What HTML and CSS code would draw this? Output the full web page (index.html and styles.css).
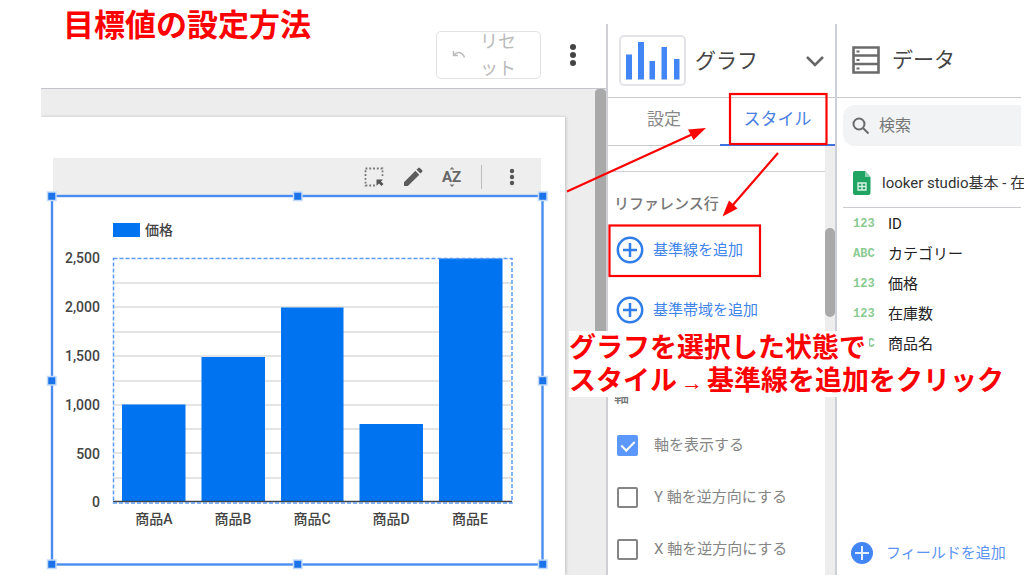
FILE: index.html
```html
<!DOCTYPE html>
<html lang="ja">
<head>
<meta charset="utf-8">
<meta name="viewport" content="width=device-width, initial-scale=1">
<title>目標値の設定方法</title>
<link rel="stylesheet" href="styles.css">
</head>
<body>
<h1 class="title">目標値の設定方法</h1>
<main class="app">
  <section class="editor">
    <header class="topbar">
      <button class="reset" type="button">
        <svg width="14" height="10" viewBox="0 0 14 10" fill="none" stroke="#bbb" stroke-width="1.5"><path d="M1.500 1v4.500h4.500M2 5C5 1.500 10.500 1.500 12.500 7.500"/></svg>
        <span class="reset-label">リセット</span>
      </button>
      <button class="icon-btn more" type="button" aria-label="その他">
        <svg width="8" height="24" viewBox="0 0 8 24" fill="#444"><circle cx="4" cy="4" r="3"/><circle cx="4" cy="12" r="3"/><circle cx="4" cy="20" r="3"/></svg>
      </button>
    </header>
    <div class="canvas">
      <div class="sheet">
        <div class="tools">
          <button class="icon-btn tool" type="button" aria-label="選択">
            <svg width="20" height="20" viewBox="0 0 20 20"><rect x="1.500" y="1.500" width="17" height="17" fill="none" stroke="#777" stroke-width="1.800" stroke-dasharray="1.900 1.880"/><path d="M11 11h9v9h-9z" fill="#eee"/><path d="M12.500 12.500H19L17 14.500l2.500 2.500-2 2-2.500-2.500-2.500 2.300z" fill="#555"/></svg>
          </button>
          <button class="icon-btn tool" type="button" aria-label="編集">
            <svg width="20" height="20" viewBox="0 0 20 20" fill="#5c5c5c"><path d="M1 15.200 12.400 3.800l3.900 3.900L4.900 19H1zM13.500 2.700l1.800-1.800q.8-.7 1.600 0l2.300 2.300q.7.800 0 1.600l-1.800 1.800z"/></svg>
          </button>
          <button class="icon-btn tool" type="button" aria-label="並べ替え">
            <span class="az">AZ</span>
            <svg class="az-arrows" width="6" height="20" viewBox="0 0 6 20" fill="#777"><path d="M3 0 5.500 2.500h-5zM3 20l2.500-2.500h-5z"/></svg>
          </button>
          <span class="tool-sep"></span>
          <button class="icon-btn tool" type="button" aria-label="メニュー">
            <svg width="6" height="18" viewBox="0 0 6 18" fill="#555"><circle cx="3" cy="3" r="2.200"/><circle cx="3" cy="9" r="2.200"/><circle cx="3" cy="15" r="2.200"/></svg>
          </button>
        </div>
        <svg class="chart" viewBox="47 195 500 374" role="img" aria-label="価格の棒グラフ">
          <rect x="52" y="196" width="490.500" height="368.500" fill="#fff" stroke="#4a8df0" stroke-width="2.400"/>
          <path d="M113 283H512M113 307H512M113 332H512M113 356H512M113 381H512M113 405H512M113 429H512M113 453H512M113 478H512" stroke="#dcdcdc" stroke-width="1.500"/>
          <g fill="#0073f0">
            <rect x="113" y="223" width="27" height="14"/>
            <rect x="122" y="404.500" width="63.500" height="97.500"/>
            <rect x="201.500" y="357" width="63.500" height="145"/>
            <rect x="281" y="307.500" width="62.500" height="194.500"/>
            <rect x="359.500" y="424" width="63.500" height="78"/>
            <rect x="439" y="258.500" width="63.500" height="243.500"/>
          </g>
          <path d="M113 501.500H512" stroke="#444" stroke-width="1.500"/>
          <rect x="113.500" y="258.500" width="398.500" height="244.500" fill="none" stroke="#5a9af5" stroke-width="1.500" stroke-dasharray="4 2"/>
          <g class="chart-text">
            <text x="145" y="235">価格</text>
            <g text-anchor="end">
              <text x="100" y="263">2,500</text><text x="100" y="312">2,000</text><text x="100" y="361">1,500</text><text x="100" y="410">1,000</text><text x="100" y="459">500</text><text x="100" y="507">0</text>
            </g>
            <g text-anchor="middle">
              <text x="154" y="524">商品A</text><text x="233" y="524">商品B</text><text x="312" y="524">商品C</text><text x="391" y="524">商品D</text><text x="470" y="524">商品E</text>
            </g>
          </g>
          <g fill="#1a73e8" stroke="#c3dafa" stroke-width="1.500">
            <rect x="47.500" y="192" width="8.500" height="8.500"/><rect x="293.500" y="192" width="8.500" height="8.500"/><rect x="538.500" y="192" width="8.500" height="8.500"/>
            <rect x="47.500" y="376.500" width="8.500" height="8.500"/><rect x="538.500" y="376.500" width="8.500" height="8.500"/>
            <rect x="47.500" y="560" width="8.500" height="8.500"/><rect x="293.500" y="560" width="8.500" height="8.500"/><rect x="538.500" y="560" width="8.500" height="8.500"/>
          </g>
        </svg>
      </div>
      <div class="canvas-scroll"></div>
    </div>
  </section>

  <section class="panel">
    <header class="panel-head">
      <span class="chart-type">
        <svg width="54" height="38" viewBox="0 0 54 38" fill="#4285f4"><path d="M0 12.500h6v25H0zM12 0h6v37.500h-6zM23.500 19h5.500v18.500h-5.500zM35.500 5h5.500v32.500h-5.500zM48 17h5.500v20.500H48z"/></svg>
      </span>
      <h2 class="head-text">グラフ</h2>
      <button class="icon-btn chevron" type="button" aria-label="グラフの種類">
        <svg width="20" height="12" viewBox="0 0 20 12" fill="none" stroke="#666" stroke-width="2.500"><path d="m2 2 8 8 8-8"/></svg>
      </button>
    </header>
    <nav class="tabs">
      <button class="tab" type="button">設定</button>
      <button class="tab tab-on" type="button">スタイル</button>
    </nav>
    <div class="panel-body">
      <div class="options">
        <div class="strip"></div>
        <h3 class="group">リファレンス行</h3>
        <button class="add" type="button">
          <svg width="28" height="28" viewBox="0 0 28 28" fill="none" stroke="#2f7de9" stroke-width="2.500"><circle cx="14" cy="14" r="12.200"/><path d="M14 7v14M7 14h14"/></svg>
          基準線を追加
        </button>
        <button class="add" type="button">
          <svg width="28" height="28" viewBox="0 0 28 28" fill="none" stroke="#2f7de9" stroke-width="2.500"><circle cx="14" cy="14" r="12.200"/><path d="M14 7v14M7 14h14"/></svg>
          基準帯域を追加
        </button>
        <h3 class="group axis">軸</h3>
        <label class="check"><input class="box" type="checkbox" checked>軸を表示する</label>
        <label class="check"><input class="box" type="checkbox">Y 軸を逆方向にする</label>
        <label class="check"><input class="box" type="checkbox">X 軸を逆方向にする</label>
      </div>
      <div class="panel-scroll"><div class="panel-thumb"></div></div>
    </div>
  </section>

  <section class="data">
    <header class="data-head">
      <svg width="28" height="28" viewBox="0 0 28 28" fill="none" stroke="#6b6b6b" stroke-width="2.600"><path d="M1.500 1.500h25v25h-25zM1.500 9.500h25M1.500 18h25"/><path d="M4.500 5.500h3M4.500 14h3M4.500 22.500h3" stroke-width="2"/></svg>
      <h2 class="head-text">データ</h2>
    </header>
    <div class="search">
      <svg width="18" height="18" viewBox="0 0 18 18" fill="none" stroke="#6b6b6b" stroke-width="2"><circle cx="7" cy="7" r="5.500"/><path d="m11 11 5.500 5.500"/></svg>
      <input class="search-input" type="text" placeholder="検索" aria-label="検索">
    </div>
    <div class="source">
      <svg width="18" height="24" viewBox="0 0 18 24"><path d="M2 0h10l5.500 6v16q0 2-2 2H2q-2 0-2-2V2q0-2 2-2z" fill="#1fa463"/><path d="M12 0v6h5.500z" fill="#8ed1b1"/><path d="M5 12h8v7H5zM9 12v7M5 15.500h8" fill="none" stroke="#d9f2e5" stroke-width="1.400"/></svg>
      <span class="source-name">looker studio基本 - 在</span>
    </div>
    <ul class="fields">
      <li class="field"><span class="kind">123</span>ID</li>
      <li class="field"><span class="kind">ABC</span>カテゴリー</li>
      <li class="field"><span class="kind">123</span>価格</li>
      <li class="field"><span class="kind">123</span>在庫数</li>
      <li class="field"><span class="kind">ABC</span>商品名</li>
    </ul>
    <button class="add-field" type="button">
      <svg width="22" height="22" viewBox="0 0 22 22"><circle cx="11" cy="11" r="11" fill="#4285f4"/><path d="M11 4v14M4 11h14" stroke="#e4eeff" stroke-width="2"/></svg>
      フィールドを追加
    </button>
  </section>
</main>

<svg class="marks" width="470" height="300" viewBox="554 0 470 300" aria-hidden="true">
  <g fill="none" stroke="#f00" stroke-width="2.200">
    <rect x="730" y="94" width="96.500" height="50"/>
    <rect x="609.500" y="225.500" width="150.500" height="50.500"/>
    <path d="M567 191.500 694 133.500M778 153 732 206"/>
  </g>
  <path d="M706 128 688 129.500 693.500 140zM722.500 216.500 729 200.500 737.500 208.500z" fill="#f00"/>
</svg>
<p class="note"><span class="note-line">グラフを選択した状態で</span><span class="note-line">スタイル<span class="arrow">→</span>基準線を追加をクリック</span></p>
</body>
</html>
```

FILE: styles.css
```css
* { box-sizing: border-box; }

body {
  margin: 0;
  padding: 24px 3px 0 41px;
  position: relative;
  min-height: 100vh;
  overflow: hidden;
  background: #fff;
  color: #333;
  font: 15px/20px Roboto, "Noto Sans CJK JP", sans-serif;
}

h1, h2, h3, p, ul { margin: 0; padding: 0; }
button { border: 0; padding: 0; background: none; font: inherit; color: inherit; cursor: pointer; }
svg { display: block; flex: none; }

.title {
  position: absolute;
  top: 3px;
  left: 63px;
  color: #f00;
  font: bold 31px/40px "Noto Sans CJK JP", sans-serif;
}

.app {
  display: grid;
  grid-template-columns: minmax(0, 1fr) 229px 186px;
  height: calc(100vh - 25px);
  min-height: 550px;
}

/* Editor */
.editor { display: flex; flex-direction: column; min-width: 0; }
.topbar {
  display: flex;
  align-items: flex-start;
  justify-content: flex-end;
  height: 65px;
  padding: 7px 21px 0 0;
  border-bottom: 1px solid #c4c4cc;
}
.reset {
  display: flex;
  align-items: center;
  gap: 14px;
  width: 105px;
  height: 48px;
  padding-left: 15px;
  border: 1px solid #e2e2e2;
  border-radius: 5px;
  color: #bbb;
  font-size: 18px;
  line-height: 27px;
}
.reset-label { width: 36px; text-align: left; }
.icon-btn { display: flex; align-items: center; justify-content: center; position: relative; }
.more { width: 24px; height: 48px; margin-left: 20px; }
.canvas {
  display: flex;
  flex: 1;
  min-height: 0;
  padding-top: 28px;
  overflow: hidden;
  background: #ededed;
}
.sheet {
  flex: 1;
  padding: 41px 18px 0 6px;
  background: #fff;
  box-shadow: 1px 0 3px rgba(0, 0, 0, .2);
}
.canvas-scroll {
  width: 11px;
  height: 243px;
  margin: -28px 0 0 30px;
  border-radius: 4px 4px 0 0;
  background: #a9a9a9;
}
.tools {
  display: flex;
  align-items: center;
  justify-content: flex-end;
  height: 37px;
  margin: 0 6px;
  padding-right: 10px;
  background: #eee;
}
.tool { width: 39px; height: 37px; }
.tool-sep { width: 1px; height: 24px; margin: 0 10px; background: #bbb; }
.az { color: #666; font-size: 15px; font-weight: 700; }
.az-arrows { position: absolute; top: 9px; left: 17px; }
.chart { width: 100%; overflow: visible; }
.chart-text { fill: #444; font-size: 14px; font-weight: 500; }

/* Chart panel */
.panel { display: flex; flex-direction: column; border-left: 2px solid #cfcfd6; }
.panel-head {
  display: flex;
  align-items: center;
  height: 74px;
  padding: 0 10px 0 11px;
  border-bottom: 1px solid #c8c8c8;
}
.chart-type {
  display: flex;
  align-items: center;
  justify-content: center;
  width: 67px;
  height: 51px;
  border: 2px solid #e3e3ea;
  border-radius: 5px;
}
.head-text { padding-top: 1px; color: #444; font-size: 21px; font-weight: 400; line-height: 30px; }
.panel-head .head-text { margin-left: 9px; }
.chevron { width: 20px; height: 30px; margin-left: auto; }
.tabs { display: grid; grid-template-columns: 112px 1fr; height: 48px; border-bottom: 1px solid #c8c8c8; }
.tab { height: 48px; padding-bottom: 6px; color: #888; font-size: 17px; line-height: 24px; }
.tab-on { border-bottom: 2px solid #3f72de; padding-bottom: 4px; color: #4a7fe0; }
.panel-body { display: flex; flex: 1; min-height: 0; }
.options { flex: 1; padding-left: 6px; }
.strip { height: 26px; margin-left: -6px; border-bottom: 1px solid #d0d0d0; }
.group { padding-top: 21px; color: #777; font-size: 15px; font-weight: 500; line-height: 22px; }
.add {
  display: flex;
  align-items: center;
  gap: 9px;
  height: 60px;
  padding-left: 2px;
  color: #4083ea;
}
.add:first-of-type { margin-top: 5px; }
.axis { padding-top: 46px; }
.check { display: flex; align-items: center; gap: 16px; height: 52px; padding-left: 3px; color: #858585; }
.axis + .check { margin-top: 11px; }
.box {
  appearance: none;
  flex: none;
  width: 21px;
  height: 21px;
  margin: 0;
  border: 2px solid #858585;
  border-radius: 2px;
}
.box:checked { position: relative; border-color: #5c97fb; background: #5c97fb; }
.box:checked::after {
  content: "";
  position: absolute;
  left: 5px;
  top: 1px;
  width: 6px;
  height: 11px;
  border: solid #fff;
  border-width: 0 2px 2px 0;
  transform: rotate(45deg);
}
.panel-scroll { width: 10px; padding-top: 82px; background: #ededed; }
.panel-thumb { height: 89px; border-radius: 5px; background: #a9a9a9; }

/* Data panel */
.data { display: flex; flex-direction: column; min-width: 0; border-left: 2px solid #cbd0d8; }
.data-head {
  display: flex;
  align-items: center;
  gap: 12px;
  height: 74px;
  padding: 0 0 2px 15px;
  border-bottom: 1px solid #c8c8c8;
}
.search {
  display: flex;
  align-items: center;
  gap: 9px;
  height: 41px;
  margin: 7px 0 0 6px;
  padding-left: 9px;
  border-radius: 12px 0 0 12px;
  background: #f1f3f4;
}
.search-input { width: 100%; min-width: 0; padding: 0; border: 0; outline: 0; background: none; font: inherit; font-size: 16px; }
.search-input::placeholder { color: #777; opacity: 1; }
.source {
  display: flex;
  align-items: center;
  gap: 11px;
  height: 62px;
  margin-left: 6px;
  padding: 13px 0 0 10px;
  border-bottom: 1px solid #c8ccd0;
}
.source-name { flex: none; white-space: nowrap; }
.fields { list-style: none; padding: 1px 0 0 16px; }
.field { display: flex; align-items: center; height: 30px; color: #222; }
.kind { width: 35px; color: #8acb92; font: bold 12px/20px "Liberation Mono", monospace; }
.add-field {
  display: flex;
  align-items: center;
  gap: 13px;
  margin: auto 0 11px 14px;
  color: #5b93f3;
}

/* Annotations */
.marks { position: absolute; top: 0; right: 0; }
.note {
  position: absolute;
  top: 331px;
  right: 0;
  display: flex;
  flex-direction: column;
  align-items: flex-start;
  width: 455px;
  color: #f00;
  font: bold 27px/30px "Noto Sans CJK JP", sans-serif;
  white-space: nowrap;
}
.note-line { height: 33px; padding-right: 3px; background: #fff; }
.arrow { display: inline-block; width: 30px; text-align: center; font: 22px/30px "Liberation Sans", sans-serif; }
```
